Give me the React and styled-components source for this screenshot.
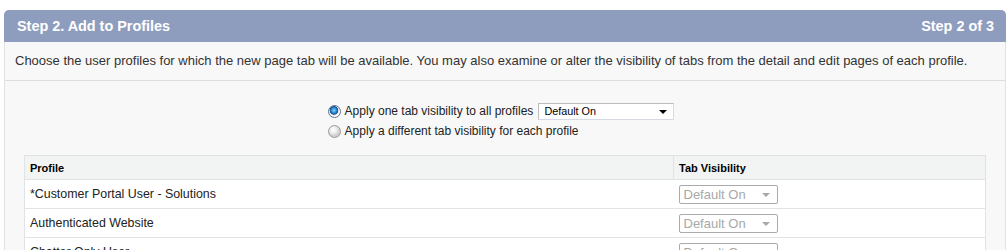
import styled, { createGlobalStyle } from "styled-components";

const GlobalStyle = createGlobalStyle`
  body {
    margin: 0;
    background: #ffffff;
    font-family: "Liberation Sans", Arial, sans-serif;
    font-size: 12px;
    color: #222222;
  }
`;

const profiles = [
  "*Customer Portal User - Solutions",
  "Authenticated Website",
  "Chatter Only User",
];

export default function App() {
  return (
    <>
      <GlobalStyle />
      <Page>
        <WizardBlock>
          <WizardHeader>
            <span>Step 2. Add to Profiles</span>
            <span>Step 2 of 3</span>
          </WizardHeader>
          <Description>
            Choose the user profiles for which the new page tab will be
            available. You may also examine or alter the visibility of tabs
            from the detail and edit pages of each profile.
          </Description>
          <WizardBody>
            <OptionsWrap>
              <Options>
                <OptionRow>
                  <Radio $checked />
                  <span>Apply one tab visibility to all profiles</span>
                  <FakeSelect>
                    <span>Default On</span>
                    <Arrow />
                  </FakeSelect>
                </OptionRow>
                <OptionRow>
                  <Radio />
                  <span>Apply a different tab visibility for each profile</span>
                </OptionRow>
              </Options>
            </OptionsWrap>
            <ProfileTable>
              <thead>
                <tr>
                  <HeadCell>Profile</HeadCell>
                  <HeadCell $narrow>Tab Visibility</HeadCell>
                </tr>
              </thead>
              <tbody>
                {profiles.map((p) => (
                  <tr key={p}>
                    <Cell>{p}</Cell>
                    <Cell>
                      <DisabledSelect>
                        <span>Default On</span>
                        <Arrow $disabled />
                      </DisabledSelect>
                    </Cell>
                  </tr>
                ))}
              </tbody>
            </ProfileTable>
          </WizardBody>
        </WizardBlock>
      </Page>
    </>
  );
}

const Page = styled.div`
  padding: 10px 1px 0 4px;
  height: 240px;
  overflow: hidden;
`;

const WizardBlock = styled.div`
  background: #f8f8f8;
  border-radius: 5px 5px 0 0;
  border-left: 1px solid #e2e2e2;
  border-right: 1px solid #e2e2e2;
  min-height: 260px;
`;

const WizardHeader = styled.div`
  display: flex;
  justify-content: space-between;
  align-items: center;
  height: 32px;
  margin: 0 -1px;
  padding: 0 12px 0 13px;
  background: #8e9dbe;
  border-radius: 5px 5px 0 0;
  color: #ffffff;
  font-weight: bold;
  font-size: 14.4px;
`;

const Description = styled.div`
  height: 38px;
  line-height: 38px;
  padding: 0 10px;
  border-bottom: 1px solid #dddddd;
  color: #333333;
  font-size: 13px;
  white-space: nowrap;
`;

const WizardBody = styled.div`
  padding: 20px 19px 0 19px;
`;

const OptionsWrap = styled.div`
  display: flex;
  justify-content: center;
  padding-right: 8px;
`;

const Options = styled.div`
  display: flex;
  flex-direction: column;
`;

const OptionRow = styled.div`
  display: flex;
  align-items: center;
  height: 20px;
  color: #222222;
`;

const Radio = styled.span`
  width: 11px;
  height: 11px;
  border-radius: 50%;
  margin: 0 4px 0 0;
  border: 1px solid ${(p) => (p.$checked ? "#5c7390" : "#9a9a9a")};
  background: ${(p) =>
    p.$checked
      ? "radial-gradient(circle at 45% 40%, #8fd3ff 0, #2a8ed8 2.5px, #1a4f8a 4px, #e8e8e8 4.6px, #ffffff 6px)"
      : "radial-gradient(circle at 40% 35%, #ffffff 0, #f0f0f0 3px, #cfcfcf 6px)"};
  box-sizing: content-box;
`;

const FakeSelect = styled.div`
  display: flex;
  align-items: center;
  justify-content: space-between;
  box-sizing: border-box;
  width: 136px;
  height: 17px;
  margin-left: 5px;
  padding: 0 6px 0 5px;
  background: #ffffff;
  border: 1px solid #bdbdbd;
  border-right-color: #d8d8e8;
  border-bottom-color: #d8d8e8;
  font-size: 10.8px;
  color: #000000;
`;

const Arrow = styled.span`
  width: 0;
  height: 0;
  border-left: 4px solid transparent;
  border-right: 4px solid transparent;
  border-top: 4px solid ${(p) => (p.$disabled ? "#a8a8a8" : "#000000")};
  margin-top: 1px;
`;

const ProfileTable = styled.table`
  width: 100%;
  margin-top: 14px;
  border-collapse: collapse;
  background: #ffffff;
  border: 1px solid #e0e3e5;
`;

const HeadCell = styled.th`
  height: 23px;
  padding: 0 5px;
  text-align: left;
  font-size: 11px;
  font-weight: bold;
  color: #000000;
  background: #f2f3f3;
  border-bottom: 1px solid #e0e3e5;
  border-left: ${(p) => (p.$narrow ? "1px solid #e0e3e5" : "none")};
  width: ${(p) => (p.$narrow ? "301px" : "auto")};
`;

const Cell = styled.td`
  height: 28px;
  padding: 0 5px;
  font-size: 12.4px;
  color: #222222;
  border-bottom: 1px solid #e3e3e3;
`;

const DisabledSelect = styled.div`
  display: flex;
  align-items: center;
  justify-content: space-between;
  box-sizing: border-box;
  width: 99px;
  height: 19px;
  padding: 0 7px 0 4px;
  border: 1px solid #ababab;
  border-radius: 2px;
  background: #ffffff;
  color: #a8a8a8;
  font-size: 13px;
`;
